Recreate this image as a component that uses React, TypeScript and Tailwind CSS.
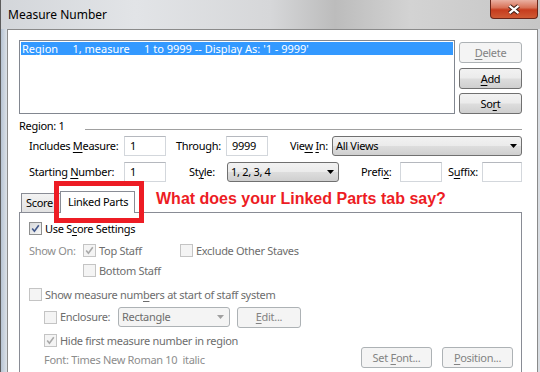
import React from "react";

function U({ children }: { children: React.ReactNode }) {
  return <span className="underline decoration-1 underline-offset-2">{children}</span>;
}

function Check({ checked = false, disabled = false }: { checked?: boolean; disabled?: boolean }) {
  return (
    <span
      className={
        disabled
          ? "flex h-[13px] w-[13px] shrink-0 items-center justify-center border border-[#c4c4c4] bg-[#f4f4f4]"
          : "flex h-[13px] w-[13px] shrink-0 items-center justify-center border border-[#8e8f8f] bg-[linear-gradient(135deg,#d6d7d9,#f8f8f8)]"
      }
    >
      {checked && (
        <svg width="9" height="9" viewBox="0 0 9 9">
          <path d="M1.2 4.6 L3.4 7.2 L7.8 1.2" fill="none" stroke={disabled ? "#a9a9a9" : "#41578a"} strokeWidth="1.6" />
        </svg>
      )}
    </span>
  );
}

function Btn({ children, disabled = false, w }: { children: React.ReactNode; disabled?: boolean; w: string }) {
  return (
    <div
      className={
        (disabled
          ? "flex h-[21px] shrink-0 items-center justify-center rounded-[3px] border border-[#adb2b5] bg-[#f4f4f4] text-[#838383] "
          : "flex h-[21px] shrink-0 items-center justify-center rounded-[3px] border border-[#707070] bg-[linear-gradient(#f2f2f2_0%,#ebebeb_48%,#dddddd_52%,#cfcfcf_100%)] text-black ") + w
      }
    >
      <span className="whitespace-pre">{children}</span>
    </div>
  );
}

function Combo({ text, w }: { text: string; w: string }) {
  return (
    <div
      className={
        "flex h-[20px] shrink-0 items-center justify-between rounded-[3px] border border-[#707070] bg-[linear-gradient(#f2f2f2_0%,#ebebeb_48%,#dddddd_52%,#cfcfcf_100%)] pl-[3px] pr-[4px] " +
        w
      }
    >
      <span>{text}</span>
      <svg width="7" height="4" viewBox="0 0 7 4">
        <path d="M0 0 H7 L3.5 4 Z" fill="#000" />
      </svg>
    </div>
  );
}

function Field({ value = "", w }: { value?: string; w: string }) {
  return (
    <div className={"flex h-[20px] shrink-0 items-center border border-[#d3d7dc] border-t-[#b5b8be] bg-white pl-[5px] " + w}>
      {value}
    </div>
  );
}

export default function App() {
  return (
    <div className="relative flex h-[372px] w-[540px] flex-col overflow-hidden bg-[#d6dadf] font-['Noto_Sans',sans-serif] text-[11px] leading-[14px] tracking-[-0.3px] text-black">
      {/* Title bar */}
      <div className="flex h-[29px] shrink-0 items-start justify-between border-l border-[#5c5c5c] bg-[linear-gradient(90deg,#d3d6da_0%,#e2e4e7_25%,#d6d7d9_50%,#bcbcbc_62%,#d3d3d3_76%,#c6c6c6_100%)]">
        <div className="ml-[7px] mt-[7px] text-[12px] leading-[16px] tracking-normal">Measure Number</div>
        <div className="mr-[2px] flex h-[19px] w-[48px] items-center justify-center rounded-b-[4px] border border-t-0 border-[#6a261a] bg-[linear-gradient(#eab0a2_0%,#d87258_42%,#c63c1e_55%,#cf5a34_100%)]">
          <svg width="14" height="11" viewBox="0 0 14 11">
            <path d="M2.5 1.8 L11.5 9.2 M11.5 1.8 L2.5 9.2" stroke="#3d1c14" strokeWidth="4.2" />
            <path d="M2.5 1.8 L11.5 9.2 M11.5 1.8 L2.5 9.2" stroke="#ffffff" strokeWidth="2.2" />
          </svg>
        </div>
      </div>

      <div className="flex min-h-0 flex-1">
        <div className="w-[7px] shrink-0 border-l border-[#5c5c5c] bg-[linear-gradient(90deg,#b7c4d4,#dde2e7)]" />
        <div className="flex w-[531px] shrink-0 flex-col border-l border-r border-t border-[#8a8a8a] bg-white pl-[11px] pr-[15px] pt-[10px]">
          {/* list + buttons */}
          <div className="flex">
            <div className="h-[74px] w-[436px] shrink-0 border border-[#828790] bg-white p-px">
              <div className="h-[13px] whitespace-pre bg-[#3399ff] pl-[1px] leading-[13px] tracking-normal text-white">
                {"Region     1, measure     1 to 9999 -- Display As: '1 - 9999'"}
              </div>
            </div>
            <div className="ml-[4px] flex flex-col pt-[2px]">
              <Btn disabled w="w-[63px]">
                <U>D</U>elete
              </Btn>
              <div className="mt-[5px]">
                <Btn w="w-[63px]">
                  <U>A</U>dd
                </Btn>
              </div>
              <div className="mt-[4px]">
                <Btn w="w-[63px]">
                  So<U>r</U>t
                </Btn>
              </div>
            </div>
          </div>

          {/* Region separator */}
          <div className="mt-[5px] flex h-[14px] items-center">
            <div className="w-[66px] shrink-0">Region: 1</div>
            <div className="mt-[6px] h-px flex-1 bg-[#a0a0a0]" />
          </div>

          {/* Row 1 */}
          <div className="mt-[3px] flex items-center">
            <div className="ml-[10px] w-[95px] shrink-0">
              Includes <U>M</U>easure:
            </div>
            <Field value="1" w="w-[42px]" />
            <div className="ml-[10px] w-[50px] shrink-0">Through:</div>
            <Field value="9999" w="w-[42px]" />
            <div className="flex-1 pr-[4px] text-right">
              Vie<U>w</U> <U>I</U>n:
            </div>
            <Combo text="All Views" w="w-[190px]" />
          </div>

          {/* Row 2 */}
          <div className="mt-[6px] flex items-center">
            <div className="ml-[10px] w-[95px] shrink-0">
              Starting <U>N</U>umber:
            </div>
            <Field value="1" w="w-[42px]" />
            <div className="ml-[23px] w-[38px] shrink-0">
              St<U>y</U>le:
            </div>
            <Combo text="1, 2, 3, 4" w="w-[112px]" />
            <div className="ml-[22px] w-[39px] shrink-0">
              Prefi<U>x</U>:
            </div>
            <Field w="w-[42px]" />
            <div className="ml-[6px] w-[34px] shrink-0">
              S<U>u</U>ffix:
            </div>
            <Field w="w-[40px]" />
          </div>

          {/* Tabs */}
          <div className="mt-[9px] flex h-[21px] items-end">
            <div className="ml-[2px] h-[19px] w-[41px] shrink-0 border-l border-r border-t border-[#898c95] bg-[linear-gradient(#f3f3f3,#e2e2e2)] pl-[4px] pt-[2px]">
              Score
            </div>
            <div className="relative z-10 -mb-px -ml-[2px] h-[22px] w-[75px] shrink-0 border-l border-r border-t border-[#898c95] bg-white pl-[7px] pt-[3px]">
              Linked Parts
            </div>
            <div className="-mt-[1px] ml-[21px] self-start whitespace-nowrap font-['Liberation_Sans',Arial,sans-serif] text-[16px] font-bold leading-[18px] tracking-normal text-[#ed1c24]">
              What does your Linked Parts tab say?
            </div>
          </div>

          {/* Panel */}
          <div className="flex h-[200px] shrink-0 flex-col border border-[#898c95] bg-white pl-[9px] pr-[8px] pt-[9px]">
            <div className="flex h-[13px] items-center">
              <Check checked />
              <span className="ml-[3px]">
                Use S<U>c</U>ore Settings
              </span>
            </div>

            <div className="mt-[9px] flex h-[13px] items-center">
              <div className="w-[54px] shrink-0 text-[#8d8d8d]">Show On:</div>
              <div className="flex w-[97px] shrink-0 items-center">
                <Check checked disabled />
                <span className="ml-[3px] text-[#6d6d6d]">Top Staff</span>
              </div>
              <Check disabled />
              <span className="ml-[3px] text-[#6d6d6d]">Exclude Other Staves</span>
            </div>

            <div className="mt-[7px] flex h-[13px] items-center pl-[54px]">
              <Check disabled />
              <span className="ml-[3px] text-[#6d6d6d]">Bottom Staff</span>
            </div>

            <div className="mt-[11px] flex h-[13px] items-center">
              <Check disabled />
              <span className="ml-[3px] text-[#6d6d6d]">
                Show measure num<U>b</U>ers at start of staff system
              </span>
            </div>

            <div className="mt-[6px] flex h-[20px] items-center pl-[15px]">
              <div className="flex w-[74px] shrink-0 items-center">
                <Check disabled />
                <span className="ml-[3px] text-[#6d6d6d]">Enclosure:</span>
              </div>
              <div className="flex h-[20px] w-[112px] shrink-0 items-center justify-between rounded-[3px] border border-[#adb2b5] bg-[#f4f4f4] pl-[3px] pr-[5px] text-[#6d6d6d]">
                <span>Rectangle</span>
                <svg width="7" height="4" viewBox="0 0 7 4">
                  <path d="M0 0 H7 L3.5 4 Z" fill="#a0a0a0" />
                </svg>
              </div>
              <div className="ml-[7px]">
                <Btn disabled w="w-[64px]">
                  <U>E</U>dit...
                </Btn>
              </div>
            </div>

            <div className="mt-[7px] flex h-[13px] items-center pl-[15px]">
              <Check checked disabled />
              <span className="ml-[3px] text-[#6d6d6d]">Hide first measure number in region</span>
            </div>

            <div className="flex items-start pl-[15px]">
              <div className="mt-[6px] whitespace-pre text-[#8d8d8d]">{"Font: Times New Roman 10  italic"}</div>
              <div className="ml-auto">
                <Btn disabled w="w-[71px]">
                  Set <U>F</U>ont...
                </Btn>
              </div>
              <div className="ml-[10px]">
                <Btn disabled w="w-[71px]">
                  <U>P</U>osition...
                </Btn>
              </div>
            </div>
          </div>
        </div>
        <div className="flex-1 bg-[#d9dde2]" />
      </div>

      {/* annotation rectangle */}
      <div className="pointer-events-none absolute left-[54px] top-[181px] h-[42px] w-[90px] border-[5px] border-[#ed1c24]" />
    </div>
  );
}
